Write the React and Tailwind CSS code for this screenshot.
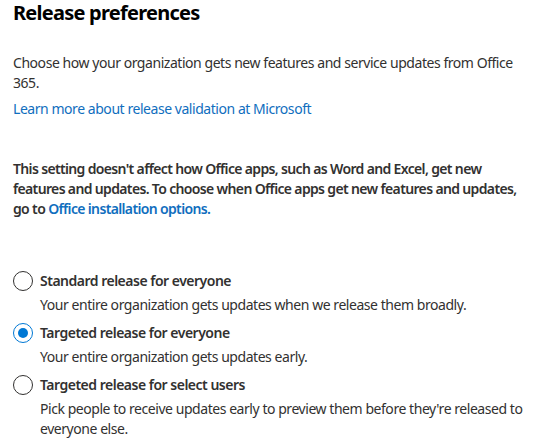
const Radio = ({ checked }) => (
  <span
    className={
      checked
        ? "flex h-[20px] w-[20px] shrink-0 items-center justify-center rounded-full border border-[#0078d4] bg-white"
        : "flex h-[20px] w-[20px] shrink-0 items-center justify-center rounded-full border border-[#323130] bg-white"
    }
  >
    {checked && <span className="h-[10px] w-[10px] rounded-full bg-[#0078d4]" />}
  </span>
);

const options = [
  {
    label: "Standard release for everyone",
    desc: "Your entire organization gets updates when we release them broadly.",
    checked: false,
  },
  {
    label: "Targeted release for everyone",
    desc: "Your entire organization gets updates early.",
    checked: true,
  },
  {
    label: "Targeted release for select users",
    desc: "Pick people to receive updates early to preview them before they're released to everyone else.",
    checked: false,
  },
];

export default function App() {
  return (
    <div
      className="min-h-[443px] w-[547px] bg-white pl-[13px] pr-[6px] text-[14px] leading-[20px] tracking-[-0.45px] text-[#323130]"
      style={{ fontFamily: '"Noto Sans", sans-serif' }}
    >
      <h1 className="text-[20px] font-bold leading-[26px] tracking-[-0.75px] text-black">
        Release preferences
      </h1>
      <p className="mt-[27px] pr-[20px]">
        Choose how your organization gets new features and service updates from Office 365.
      </p>
      <a className="mt-[6px] block text-[#106ebe]">
        Learn more about release validation at Microsoft
      </a>
      <p className="mt-[40px] pr-[20px] font-semibold tracking-[-0.65px]">
        This setting doesn't affect how Office apps, such as Word and Excel, get new features
        and updates. To choose when Office apps get new features and updates, go to{" "}
        <a className="text-[#106ebe]">Office installation options.</a>
      </p>
      <div className="mt-[52px] flex flex-col">
        {options.map(({ label, desc, checked }) => (
          <div key={label} className="mb-[8px]">
            <label className="flex items-center gap-[7px]">
              <Radio checked={checked} />
              <span className="font-semibold tracking-[-0.5px]">{label}</span>
            </label>
            <p className="mt-[4px] pl-[27px] pr-[10px]">{desc}</p>
          </div>
        ))}
      </div>
    </div>
  );
}
